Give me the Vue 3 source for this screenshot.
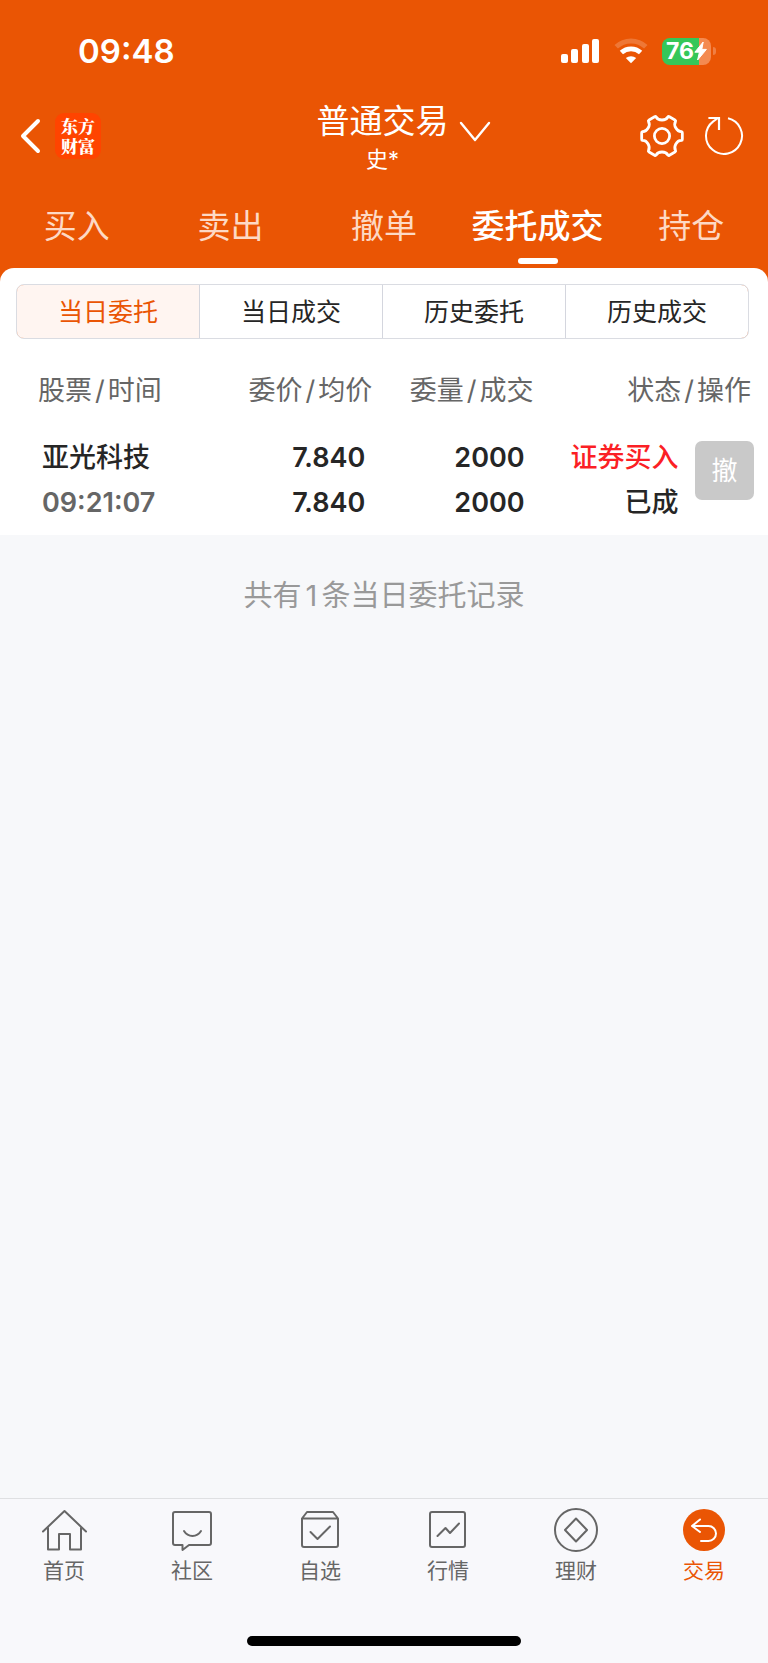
<script setup>
import { ref } from 'vue'

const tabs = ['买入', '卖出', '撤单', '委托成交', '持仓']
const activeTab = ref('委托成交')

const segments = ['当日委托', '当日成交', '历史委托', '历史成交']
const activeSegment = ref('当日委托')

const headings = [
  { left: '股票', right: '时间', span: 1 },
  { left: '委价', right: '均价', span: 1 },
  { left: '委量', right: '成交', span: 1 },
  { left: '状态', right: '操作', span: 2 }
]

const orders = [
  {
    name: '亚光科技',
    time: '09:21:07',
    price: '7.840',
    average: '7.840',
    amount: '2000',
    filled: '2000',
    side: '证券买入',
    status: '已成'
  }
]

const navItems = [
  { id: 'home', label: '首页' },
  { id: 'community', label: '社区' },
  { id: 'watchlist', label: '自选' },
  { id: 'market', label: '行情' },
  { id: 'wealth', label: '理财' },
  { id: 'trade', label: '交易' }
]
const activeNav = ref('trade')

// Six-toothed gear outline around (24, 24)
const gearPath = (() => {
  const turn = (x, y, deg) => {
    const a = (deg * Math.PI) / 180
    const px = 24 + x * Math.cos(a) - y * Math.sin(a)
    const py = 24 + x * Math.sin(a) + y * Math.cos(a)
    return `${px.toFixed(2)} ${py.toFixed(2)}`
  }
  let d = `M${turn(-5.8, -19, 0)}`
  for (let deg = 0; deg < 360; deg += 60) {
    d += `C${turn(-3.8, -15, deg)} ${turn(3.8, -15, deg)} ${turn(5.8, -19, deg)}`
    d += `Q${turn(6.4, -19.8, deg)} ${turn(7.4, -19.2, deg)}`
    d += `L${turn(-7.4, -19.2, deg + 60)}Q${turn(-6.4, -19.8, deg + 60)} ${turn(-5.8, -19, deg + 60)}`
  }
  return d + 'Z'
})()
</script>

<template>
  <div class="page">
    <header class="top">
      <div class="status">
        <time class="clock">09:48</time>
        <div class="signals">
          <svg class="bars" width="40" height="26" viewBox="0 0 40 26" fill="#fff" aria-hidden="true">
            <rect x="1" y="16" width="7" height="9" rx="2" />
            <rect x="11" y="11" width="7" height="14" rx="2" />
            <rect x="22" y="6" width="7" height="19" rx="2" />
            <rect x="32" y="1" width="7" height="24" rx="2" />
          </svg>
          <svg class="wifi" width="34" height="26" viewBox="0 0 34 26" fill="none" aria-hidden="true">
            <path d="M2.2 8.8a21.5 21.5 0 0 1 29.6 0" stroke="#fff" stroke-opacity=".2" stroke-width="5" />
            <path d="M7.4 14.6a14.2 14.2 0 0 1 19.2 0" stroke="#fff" stroke-width="4.8" />
            <path d="M11.8 20.1a8 8 0 0 1 10.4 0L17 25.2z" fill="#fff" />
          </svg>
          <div class="battery">
            <span class="level">76</span>
            <svg width="13" height="20" viewBox="0 0 13 20" fill="#fff" aria-hidden="true">
              <path d="M9.2 1 .8 11.2h4.6L3.6 19 12.4 8.4H7.8z" stroke="#fff" stroke-width="1" stroke-linejoin="round" />
            </svg>
          </div>
          <span class="battery-cap"></span>
        </div>
      </div>

      <div class="titlebar">
        <div class="side">
          <button class="icon-btn" type="button" aria-label="返回">
            <svg width="22" height="36" viewBox="0 0 22 36" fill="none" stroke="#fff" stroke-width="4" stroke-linecap="round" stroke-linejoin="round">
              <path d="M18 3 3 18l15 15" />
            </svg>
          </button>
          <a class="logo" href="#">
            <span>东方</span>
            <span>财富</span>
          </a>
        </div>
        <div class="account">
          <div class="names">
            <h1>普通交易</h1>
            <p>史*</p>
          </div>
          <button class="icon-btn expand" type="button" aria-label="切换账户">
            <svg width="32" height="22" viewBox="0 0 32 22" fill="none" stroke="#fff" stroke-width="2.4" stroke-linecap="round" stroke-linejoin="round">
              <path d="m2 2 14 17L30 2" />
            </svg>
          </button>
        </div>
        <div class="side tools">
          <button class="icon-btn" type="button" aria-label="设置">
            <svg width="48" height="48" viewBox="0 0 48 48" fill="none" stroke="#fff" stroke-width="2.8" stroke-linejoin="round">
              <path :d="gearPath" />
              <circle cx="24" cy="24" r="7.6" />
            </svg>
          </button>
          <button class="icon-btn" type="button" aria-label="刷新">
            <svg width="42" height="42" viewBox="0 0 42 42" fill="none" stroke="#fff" stroke-width="2">
              <path d="M25 3.300A18 18 0 1 1 10 6.600L15 3" />
              <path d="M5.400 3H16v12" stroke-width="2.2" />
            </svg>
          </button>
        </div>
      </div>

      <nav class="tabs">
        <button
          v-for="tab in tabs"
          :key="tab"
          type="button"
          :class="{ active: tab === activeTab }"
          @click="activeTab = tab"
        >
          {{ tab }}
        </button>
      </nav>
    </header>

    <main class="content">
      <section class="sheet">
        <div class="segments">
          <button
            v-for="segment in segments"
            :key="segment"
            type="button"
            :class="{ active: segment === activeSegment }"
            @click="activeSegment = segment"
          >
            {{ segment }}
          </button>
        </div>

        <table class="orders">
          <colgroup>
            <col class="c-stock" />
            <col class="c-price" />
            <col class="c-amount" />
            <col class="c-status" />
            <col class="c-action" />
          </colgroup>
          <thead>
            <tr>
              <th v-for="h in headings" :key="h.left" :colspan="h.span">
                {{ h.left }}<span class="slash">/</span>{{ h.right }}
              </th>
            </tr>
          </thead>
          <tbody>
            <tr v-for="order in orders" :key="order.time">
              <td class="stock">
                <div>{{ order.name }}</div>
                <div class="time">{{ order.time }}</div>
              </td>
              <td class="price">
                <div>{{ order.price }}</div>
                <div>{{ order.average }}</div>
              </td>
              <td class="amount">
                <div>{{ order.amount }}</div>
                <div>{{ order.filled }}</div>
              </td>
              <td class="state">
                <div class="buy">{{ order.side }}</div>
                <div>{{ order.status }}</div>
              </td>
              <td class="action">
                <button class="cancel" type="button">撤</button>
              </td>
            </tr>
          </tbody>
        </table>
      </section>

      <p class="summary">共有<span class="count">{{ orders.length }}</span>条当日委托记录</p>
    </main>

    <footer class="bottom">
      <nav class="nav">
        <a
          v-for="item in navItems"
          :key="item.id"
          href="#"
          :class="{ active: item.id === activeNav }"
          @click.prevent="activeNav = item.id"
        >
          <svg width="48" height="48" viewBox="0 0 48 48" fill="none" stroke="currentColor" stroke-width="2" stroke-linejoin="round" stroke-linecap="round" aria-hidden="true">
            <template v-if="item.id === 'home'">
              <path d="M3 25.500 24.500 5 46 25.500" />
              <path d="M8 22v21.500h11V28h11v15.500h11V22" />
            </template>
            <template v-else-if="item.id === 'community'">
              <path d="M7 6h34a2 2 0 0 1 2 2v29a2 2 0 0 1-2 2H21l-6.500 5V39H7a2 2 0 0 1-2-2V8a2 2 0 0 1 2-2z" />
              <path d="M16 25c4 6.500 13 6.500 17 0" />
            </template>
            <template v-else-if="item.id === 'watchlist'">
              <path d="M6 12.500 11 6h26l5 6.500V39a2 2 0 0 1-2 2H8a2 2 0 0 1-2-2zM6 12.500h36" />
              <path d="m14.500 26 7 7L34 20.500" />
            </template>
            <template v-else-if="item.id === 'market'">
              <rect x="6" y="6" width="35" height="35" rx="2" />
              <path d="m13.500 30 8-8 4.500 5L35 17.500" />
            </template>
            <template v-else-if="item.id === 'wealth'">
              <circle cx="24" cy="24" r="21" />
              <path d="M24 12.500 35 24 24 35.500 13 24z" />
            </template>
            <template v-else>
              <circle cx="24" cy="24" r="21" fill="currentColor" stroke="none" />
              <path d="M20 13.500 12 20l8 6M12 20h16.500a7.500 7.500 0 0 1 0 15H21" stroke="#fff" />
            </template>
          </svg>
          <span>{{ item.label }}</span>
        </a>
      </nav>
      <div class="home-indicator"></div>
    </footer>
  </div>
</template>

<style>
html,
body {
  margin: 0;
  background: #f7f8fa;
}
</style>

<style scoped>
.page {
  --orange: #ea5504;
  display: flex;
  flex-direction: column;
  min-height: 100vh;
  background: #f7f8fa;
  color: #262626;
  font-family: Inter, "Noto Sans CJK SC", sans-serif;
}

button {
  padding: 0;
  border: 0;
  background: none;
  color: inherit;
  font: inherit;
  cursor: pointer;
}

a {
  text-decoration: none;
}

svg {
  display: block;
}

h1,
p {
  margin: 0;
  font-weight: 400;
}

.top {
  padding-bottom: 10px;
  background: var(--orange);
  color: #fff;
}

.status {
  display: flex;
  align-items: center;
  justify-content: space-between;
  height: 102px;
  padding: 0 52px 0 78px;
}

.clock {
  font-size: 33px;
  font-weight: 600;
}

.signals {
  display: flex;
  align-items: center;
}

.wifi {
  margin: 0 14px;
}

.battery {
  display: flex;
  align-items: center;
  justify-content: center;
  width: 49px;
  height: 27px;
  border-radius: 8px;
  background: linear-gradient(90deg, #34c759 76%, #f48a50 76%);
}

.level {
  font-size: 23px;
  font-weight: 700;
  line-height: 27px;
}

.battery-cap {
  width: 3px;
  height: 8px;
  margin-left: 2px;
  border-radius: 0 4px 4px 0;
  background: #f07f43;
}

.titlebar {
  display: grid;
  grid-template-columns: 1fr auto 1fr;
  align-items: center;
  height: 76px;
  padding: 0 23px 0 20px;
}

.side {
  display: flex;
  align-items: center;
  gap: 13px;
  padding-bottom: 8px;
}

.tools {
  justify-content: flex-end;
  gap: 17px;
}

.logo {
  display: grid;
  grid-template-rows: 20px 20px;
  width: 46px;
  padding: 3px 0;
  border-radius: 9px;
  background: #ff4400;
  color: #fff;
  font-family: "Noto Serif CJK SC", "Noto Sans CJK SC", serif;
  font-size: 17px;
  font-weight: 900;
  line-height: 20px;
  text-align: center;
}

.account {
  position: relative;
}

.names {
  text-align: center;
}

h1 {
  font-size: 33px;
  line-height: 38px;
}

.names p {
  font-size: 22px;
  line-height: 38px;
}

.expand {
  position: absolute;
  top: 19px;
  left: calc(100% + 10px);
}

.tabs {
  display: flex;
  height: 80px;
}

.tabs button {
  position: relative;
  flex: 1 1 0;
  padding-top: 12px;
  color: #fdd9c5;
  font-size: 33px;
  line-height: 68px;
  white-space: nowrap;
}

.tabs button {
  padding-top: 14px;
}

.tabs .active {
  color: #fff;
  font-weight: 500;
}

.tabs .active::after {
  content: "";
  position: absolute;
  bottom: -6px;
  left: calc(50% - 20px);
  width: 40px;
  height: 6px;
  border-radius: 3px;
  background: #fff;
}

.content {
  flex: 1;
  background: linear-gradient(var(--orange) 20px, transparent 20px);
}

.sheet {
  padding-top: 16px;
  border-radius: 14px 14px 0 0;
  background: #fff;
}

.segments {
  position: relative;
  display: flex;
  margin: 0 19px 0 16px;
  overflow: hidden;
  border: 1px solid #dadce2;
  border-radius: 8px;
}

.segments::after {
  content: "";
  position: absolute;
  inset: -1px;
  border: 1px solid #ee9466;
  border-radius: 8px;
  pointer-events: none;
  mask:
    linear-gradient(#000 0 0) 0 0 / 16px 9px no-repeat,
    linear-gradient(#000 0 0) 100% 0 / 9px 9px no-repeat,
    linear-gradient(#000 0 0) 0 100% / 16px 9px no-repeat,
    linear-gradient(#000 0 0) 100% 100% / 9px 9px no-repeat;
}

.segments button {
  flex: 1;
  height: 53px;
  padding-bottom: 4px;
  border-left: 1px solid #d4d6de;
  font-size: 25px;
}

.segments button:first-child {
  border-left: 0;
}

.segments .active {
  background: #fff5f1;
  color: var(--orange);
}

.orders {
  width: 100%;
  margin-top: 16px;
  border-collapse: collapse;
  table-layout: fixed;
  font-size: 27px;
}

.c-stock {
  width: 27%;
}

.c-price {
  width: 22%;
}

.c-amount {
  width: 21%;
}

.c-status {
  width: 19%;
}

.c-action {
  width: 11%;
}

th {
  height: 66px;
  padding: 0 4px 2px 0;
  color: #666;
  font-weight: 400;
  text-align: right;
  white-space: nowrap;
}

th:first-child {
  padding-left: 38px;
  text-align: left;
}

th:last-child {
  padding-right: 17px;
}

.slash {
  margin: 0 3px;
}

td {
  padding: 12px 0 10px;
  font-weight: 600;
  line-height: 45px;
  text-align: right;
  vertical-align: top;
  white-space: nowrap;
}

.stock {
  padding-left: 42px;
  font-weight: 500;
  text-align: left;
}

.time {
  color: #666;
  font-weight: 600;
}

.price {
  padding-right: 11px;
}

.amount {
  padding-right: 13px;
}

.state {
  padding-right: 5px;
  font-weight: 500;
}

.buy {
  color: #fb1f25;
}

.action {
  padding: 18px 14px 0 0;
}

.cancel {
  display: block;
  width: 59px;
  height: 59px;
  margin-left: auto;
  border-radius: 7px;
  background: #c9c9c9;
  color: #fff;
  font-size: 26px;
  font-weight: 400;
}

.summary {
  padding: 39px 16px;
  color: #999;
  font-size: 29px;
  line-height: 44px;
  text-align: center;
}

.count {
  margin: 0 4px;
}

.bottom {
  border-top: 1px solid #dfe0e2;
  background: #f8f8fb;
}

.nav {
  display: flex;
}

.nav a {
  display: flex;
  flex: 1;
  flex-direction: column;
  align-items: center;
  padding-top: 7px;
  color: #666;
  font-size: 21px;
  line-height: 34px;
}

.nav .active {
  color: var(--orange);
}

.home-indicator {
  width: 274px;
  height: 10px;
  margin: 48px auto 17px;
  border-radius: 5px;
  background: #000;
}
</style>
